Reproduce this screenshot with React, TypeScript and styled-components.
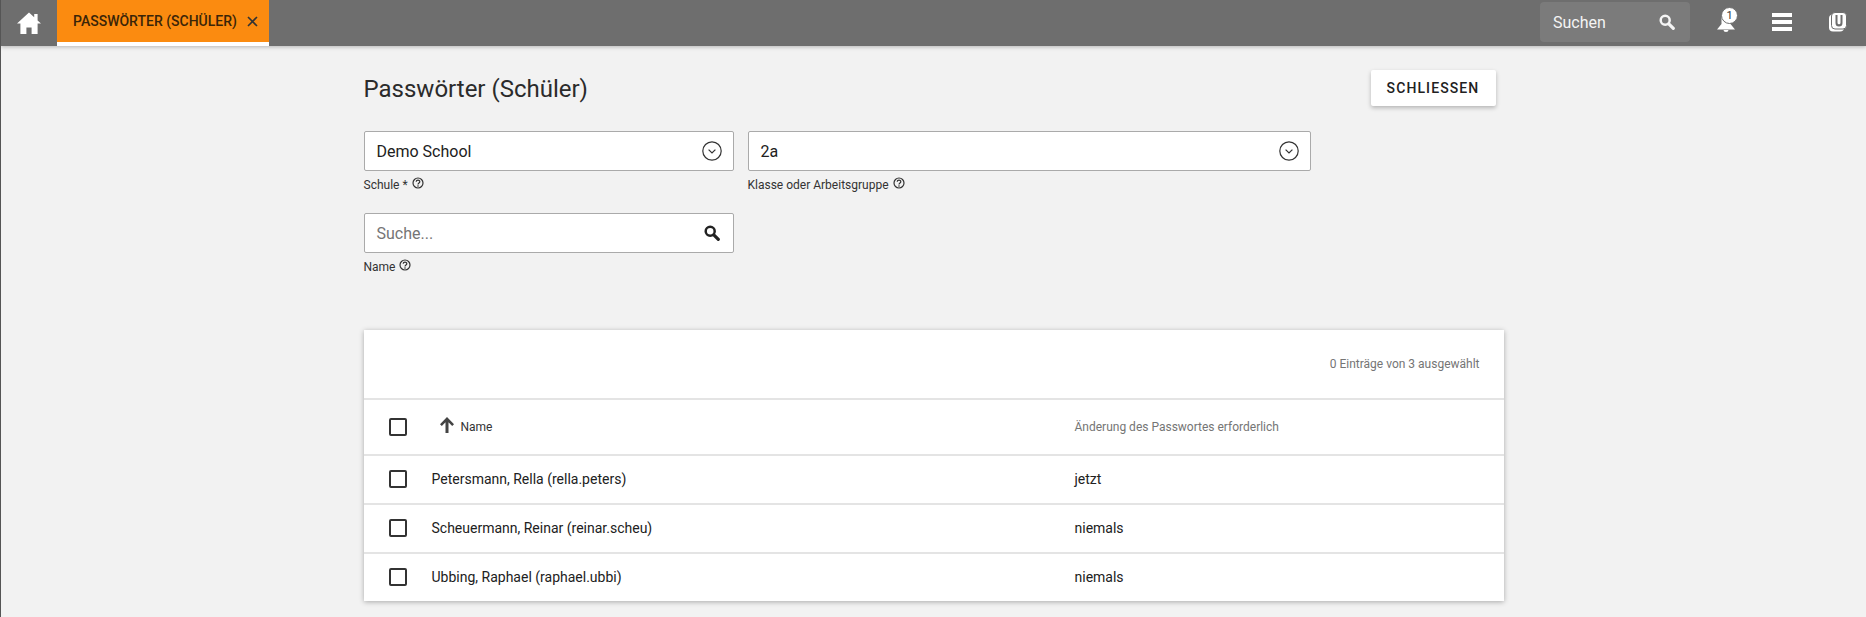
import styled, { createGlobalStyle } from "styled-components";

const rows = [
  { name: "Petersmann, Rella (rella.peters)", change: "jetzt" },
  { name: "Scheuermann, Reinar (reinar.scheu)", change: "niemals" },
  { name: "Ubbing, Raphael (raphael.ubbi)", change: "niemals" },
];

const SearchIcon = ({ size = 16 }: { size?: number }) => (
  <svg width={size} height={size} viewBox="0 0 16 16">
    <circle cx="6.2" cy="6.2" r="4.5" fill="none" stroke="currentColor" strokeWidth="2.5" />
    <path d="M9.8 9.800 14.300 14.300" stroke="currentColor" strokeWidth="3.200" strokeLinecap="round" />
  </svg>
);

const HelpIcon = () => (
  <HelpWrap>
    <svg width="12" height="12" viewBox="0 0 12 12">
      <circle cx="6" cy="6" r="5" fill="none" stroke="#333" strokeWidth="1.200" />
      <path d="M4.200 4.800c0-2.300 3.600-2.300 3.600-.1 0 1.300-1.800 1.200-1.800 2.700" fill="none" stroke="#333" strokeWidth="1.200" />
      <circle cx="6" cy="9" r=".8" fill="#333" />
    </svg>
  </HelpWrap>
);

const ChevronCircle = () => (
  <svg width="20" height="20" viewBox="0 0 20 20">
    <circle cx="10" cy="10" r="9.200" fill="none" stroke="#333" strokeWidth="1.200" />
    <path d="M6.600 8.600 10 12l3.400-3.400" fill="none" stroke="#333" strokeWidth="1.200" />
  </svg>
);

function App() {
  return (
    <Page>
      <GlobalStyle />
      <TopBar>
        <HomeButton>
          <svg width="24" height="22" viewBox="0 0 24 22">
            <path d="M12 .5 0 11.600h3.400V22h6v-6.600h5.200V22h6V11.600H24l-3.400-3.200V2h-3.400v3.200z" fill="#fff" />
          </svg>
        </HomeButton>
        <Tab>
          PASSWÖRTER (SCHÜLER)
          <svg width="11" height="11" viewBox="0 0 11 11">
            <path d="M1 1l9 9M10 1l-9 9" stroke="#333" strokeWidth="1.600" />
          </svg>
        </Tab>
        <BarRight>
          <BarSearch>
            Suchen
            <SearchIcon />
          </BarSearch>
          <BellButton>
            <svg width="18" height="20" viewBox="0 0 18 20">
              <path d="M9 1C5.500 1 4.500 4 4.500 7v5L0 17.500h18L13.500 12V7C13.500 4 12.500 1 9 1zM6.500 18a2.500 2 0 0 0 5 0z" fill="#fff" />
            </svg>
            <Badge>1</Badge>
          </BellButton>
          <MenuButton>
            <MenuBar />
            <MenuBar />
            <MenuBar />
          </MenuButton>
          <LogoButton>
            <svg width="18" height="20" viewBox="0 0 18 20">
              <rect x="0" y="2.500" width="15" height="17" rx="4" fill="#fff" />
              <rect x="2.500" y=".5" width="15" height="16.500" rx="3.500" fill="#fff" stroke="#6e6e6e" strokeWidth="1" />
              <path d="M6.500 3v8a3.500 3.500 0 0 0 7 0V3h-2v7.800a1.500 1.500 0 0 1-3 0V3z" fill="#6e6e6e" />
            </svg>
          </LogoButton>
        </BarRight>
      </TopBar>

      <Content>
        <TitleRow>
          <Title>Passwörter (Schüler)</Title>
          <CloseButton>SCHLIESSEN</CloseButton>
        </TitleRow>

        <FieldRow>
          <Field $width={370}>
            <InputBox>
              Demo School
              <ChevronCircle />
            </InputBox>
            <FieldLabel>
              Schule * <HelpIcon />
            </FieldLabel>
          </Field>
          <Field $width={563}>
            <InputBox>
              2a
              <ChevronCircle />
            </InputBox>
            <FieldLabel>
              Klasse oder Arbeitsgruppe <HelpIcon />
            </FieldLabel>
          </Field>
        </FieldRow>

        <FieldRow>
          <Field $width={370}>
            <InputBox $placeholder>
              Suche...
              <DarkSearch>
                <SearchIcon />
              </DarkSearch>
            </InputBox>
            <FieldLabel>
              Name <HelpIcon />
            </FieldLabel>
          </Field>
        </FieldRow>

        <Card>
          <CardInfo>0 Einträge von 3 ausgewählt</CardInfo>
          <HeaderRow>
            <Checkbox />
            <SortCell>
              <SortArrow>
                <svg width="14" height="16" viewBox="0 0 14 16">
                  <path d="M7 0 14 7.200 12.200 9 8.500 5.200V16h-3V5.200L1.800 9 0 7.200z" fill="#444" />
                </svg>
              </SortArrow>
              Name
            </SortCell>
            <HeaderCell>Änderung des Passwortes erforderlich</HeaderCell>
          </HeaderRow>
          {rows.map((row) => (
            <Row key={row.name}>
              <Checkbox />
              <NameCell>{row.name}</NameCell>
              <Cell>{row.change}</Cell>
            </Row>
          ))}
        </Card>
      </Content>
    </Page>
  );
}

const GlobalStyle = createGlobalStyle`
  html, body {
    margin: 0;
    background: #f2f2f2;
    font-family: Roboto, "Liberation Sans", sans-serif;
  }
`;

const Page = styled.div`
  min-height: 617px;
  border-left: 1px solid #555;
  color: #212121;
  overflow: hidden;
`;

const TopBar = styled.header`
  height: 46px;
  display: flex;
  background: #6e6e6e;
  box-shadow: 0 1px 4px rgba(0, 0, 0, 0.25);
`;

const HomeButton = styled.div`
  width: 56px;
  display: flex;
  align-items: center;
  justify-content: center;
`;

const Tab = styled.div`
  width: 212px;
  box-sizing: border-box;
  padding: 0 11px 0 16px;
  display: flex;
  align-items: center;
  justify-content: space-between;
  background: #fb8b10;
  border-bottom: 4px solid #fff;
  font-size: 14px;
  font-weight: 500;
  color: #3a2508;
`;

const BarRight = styled.div`
  margin-left: auto;
  display: flex;
  align-items: center;
`;

const BarSearch = styled.div`
  width: 150px;
  height: 40px;
  margin-bottom: 2px;
  box-sizing: border-box;
  padding: 0 15px 0 13px;
  display: flex;
  align-items: center;
  justify-content: space-between;
  background: #7b7b7b;
  border-radius: 4px;
  font-size: 16px;
  color: #f4f4f4;
`;

const BellButton = styled.div`
  position: relative;
  margin: 0 0 2px 27px;
  width: 18px;
  height: 20px;
`;

const Badge = styled.span`
  position: absolute;
  top: -5px;
  left: 4px;
  width: 17px;
  height: 17px;
  box-sizing: border-box;
  border-radius: 50%;
  background: #fff;
  border: 1px solid #6e6e6e;
  font-size: 11px;
  line-height: 15px;
  text-align: center;
  color: #333;
`;

const MenuButton = styled.div`
  margin: 0 0 2px 37px;
  width: 20px;
  height: 18px;
  display: flex;
  flex-direction: column;
  justify-content: space-between;
`;

const MenuBar = styled.span`
  height: 4px;
  background: #fff;
`;

const LogoButton = styled.div`
  margin: 0 19px 2px 37px;
  display: flex;
`;

const Content = styled.main`
  width: 1140px;
  margin: 0 auto;
`;

const TitleRow = styled.div`
  height: 85px;
  padding-right: 8px;
  display: flex;
  align-items: center;
  justify-content: space-between;
`;

const Title = styled.h1`
  margin: 0;
  font-size: 24px;
  font-weight: 400;
  color: #2b2b2b;
`;

const CloseButton = styled.button`
  width: 125px;
  height: 36px;
  margin-bottom: 2px;
  border: 0;
  border-radius: 2px;
  background: #fff;
  box-shadow: 0 2px 4px rgba(0, 0, 0, 0.25);
  font-family: inherit;
  font-size: 14px;
  font-weight: 500;
  letter-spacing: 1.1px;
  color: #212121;
`;

const FieldRow = styled.div`
  display: flex;
  gap: 14px;
  margin-bottom: 16px;
`;

const Field = styled.div<{ $width: number }>`
  width: ${(props) => props.$width}px;
`;

const InputBox = styled.div<{ $placeholder?: boolean }>`
  height: 40px;
  box-sizing: border-box;
  padding: 0 11px 0 12px;
  display: flex;
  align-items: center;
  justify-content: space-between;
  background: #fff;
  border: 1px solid #aaa;
  border-radius: 2px;
  font-size: 16px;
  color: ${(props) => (props.$placeholder ? "#757575" : "#212121")};
`;

const DarkSearch = styled.span`
  display: flex;
  margin-right: 2px;
  color: #222;
`;

const FieldLabel = styled.div`
  height: 26px;
  box-sizing: border-box;
  padding-top: 2px;
  display: flex;
  align-items: center;
  gap: 4px;
  font-size: 12px;
  color: #333;
`;

const HelpWrap = styled.span`
  display: flex;
  margin-bottom: 4px;
`;

const Card = styled.section`
  margin-top: 51px;
  background: #fff;
  box-shadow: 0 1px 5px rgba(0, 0, 0, 0.3);
`;

const CardInfo = styled.div`
  height: 68px;
  padding-right: 24px;
  box-sizing: border-box;
  display: flex;
  align-items: center;
  justify-content: flex-end;
  font-size: 12px;
  color: #757575;
`;

const Row = styled.div`
  height: 49px;
  box-sizing: border-box;
  padding: 0 0 1px 25px;
  display: flex;
  align-items: center;
  border-top: 2px solid #e4e4e4;
  font-size: 14px;
`;

const HeaderRow = styled(Row)`
  height: 56px;
  padding-bottom: 0;
  font-size: 12px;
`;

const Checkbox = styled.span`
  width: 18px;
  height: 18px;
  box-sizing: border-box;
  border: 2px solid #333;
  border-radius: 2px;
`;

const SortCell = styled.div`
  width: 668px;
  box-sizing: border-box;
  padding-left: 33px;
  display: flex;
  align-items: center;
  gap: 7px;
  color: #333;
`;

const SortArrow = styled.span`
  display: flex;
  margin-bottom: 4px;
`;

const HeaderCell = styled.div`
  color: #757575;
`;

const NameCell = styled.div`
  width: 668px;
  box-sizing: border-box;
  padding-left: 25px;
`;

const Cell = styled.div``;

export default App;
